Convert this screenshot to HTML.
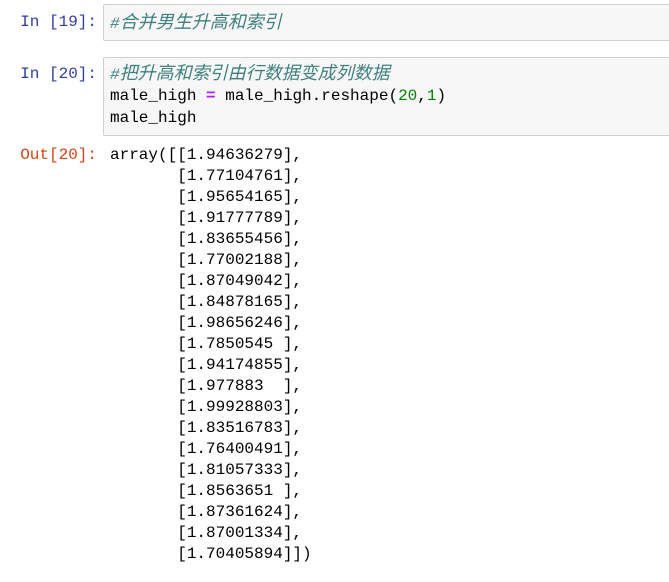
<!DOCTYPE html>
<html><head><meta charset="utf-8"><style>
body{margin:0;background:#fff;width:669px;height:582px;overflow:hidden;font-family:"Liberation Mono","Noto Sans CJK SC",monospace;font-size:16px;}
.p{position:absolute;right:572px;text-align:right;line-height:21px;white-space:pre}
.in{color:#303F9F}.out{color:#D84315}
.box{position:absolute;left:103px;width:580px;background:#f7f7f7;border:1px solid #cfcfcf;border-radius:2px;box-sizing:border-box}
.code{position:absolute;left:110px;white-space:pre;line-height:21.3px;color:#000}
.c{color:#408080;font-style:italic;font-family:"Liberation Mono","Noto Sans CJK SC",monospace}
.k{font-size:18px;font-family:"Noto Sans CJK SC",sans-serif;line-height:18px}
.o{color:#AA22FF;font-weight:bold}.n{color:#008000}
</style></head><body>
<div class="p in" style="top:12px">In [19]:</div>
<div class="box" style="top:4px;height:37px"></div>
<div class="code" style="top:12px"><span class="c">#<span class="k">合并男生升高和索引</span></span></div>
<div class="p in" style="top:64px">In [20]:</div>
<div class="box" style="top:57px;height:79px"></div>
<div class="code" style="top:63px"><span class="c">#<span class="k">把升高和索引由行数据变成列数据</span></span>
male_high <span class="o">=</span> male_high.reshape(<span class="n">20</span>,<span class="n">1</span>)
male_high</div>
<div class="p out" style="top:145px">Out[20]:</div>
<div class="code" style="top:145px;line-height:21px">array([[1.94636279],
       [1.77104761],
       [1.95654165],
       [1.91777789],
       [1.83655456],
       [1.77002188],
       [1.87049042],
       [1.84878165],
       [1.98656246],
       [1.7850545 ],
       [1.94174855],
       [1.977883  ],
       [1.99928803],
       [1.83516783],
       [1.76400491],
       [1.81057333],
       [1.8563651 ],
       [1.87361624],
       [1.87001334],
       [1.70405894]])</div>
</body></html>
